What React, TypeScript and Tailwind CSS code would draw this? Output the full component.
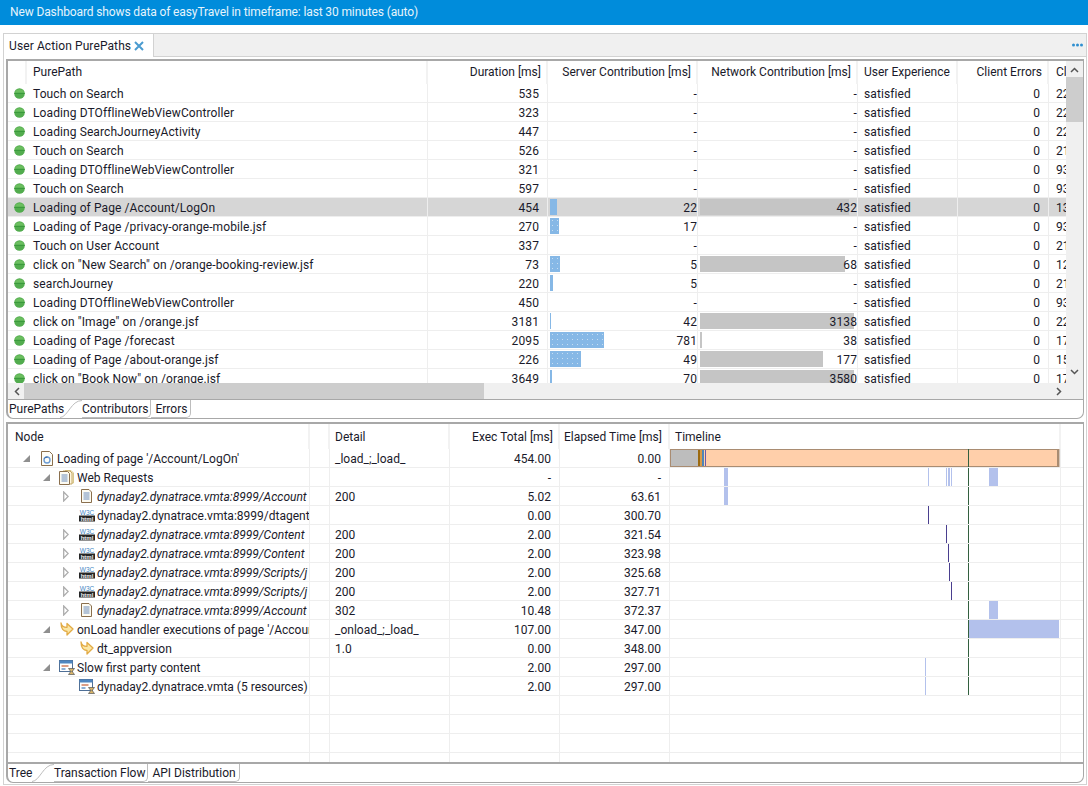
import type { ReactNode } from "react"

type ActionRow = {
  name: string
  duration: string
  server: string
  serverBar?: number
  network: string
  networkBar?: number
  cli: string
}

const actions: ActionRow[] = [
  { name: "Touch on Search", duration: "535", server: "-", network: "-", cli: "225" },
  { name: "Loading DTOfflineWebViewController", duration: "323", server: "-", network: "-", cli: "225" },
  { name: "Loading SearchJourneyActivity", duration: "447", server: "-", network: "-", cli: "225" },
  { name: "Touch on Search", duration: "526", server: "-", network: "-", cli: "219" },
  { name: "Loading DTOfflineWebViewController", duration: "321", server: "-", network: "-", cli: "93" },
  { name: "Touch on Search", duration: "597", server: "-", network: "-", cli: "93" },
  { name: "Loading of Page /Account/LogOn", duration: "454", server: "22", serverBar: 7, network: "432", networkBar: 149, cli: "135" },
  { name: "Loading of Page /privacy-orange-mobile.jsf", duration: "270", server: "17", serverBar: 9, network: "-", cli: "93" },
  { name: "Touch on User Account", duration: "337", server: "-", network: "-", cli: "219" },
  { name: 'click on "New Search" on /orange-booking-review.jsf', duration: "73", server: "5", serverBar: 10, network: "68", networkBar: 145, cli: "128" },
  { name: "searchJourney", duration: "220", server: "5", serverBar: 3, network: "-", cli: "219" },
  { name: "Loading DTOfflineWebViewController", duration: "450", server: "-", network: "-", cli: "93" },
  { name: 'click on "Image" on /orange.jsf', duration: "3181", server: "42", serverBar: 1, network: "3138", networkBar: 154, cli: "225" },
  { name: "Loading of Page /forecast", duration: "2095", server: "781", serverBar: 54, network: "38", networkBar: 2, cli: "175" },
  { name: "Loading of Page /about-orange.jsf", duration: "226", server: "49", serverBar: 31, network: "177", networkBar: 123, cli: "156" },
  { name: 'click on "Book Now" on /orange.jsf', duration: "3649", server: "70", serverBar: 2, network: "3580", networkBar: 154, cli: "175" },
]

type IconKind = "page" | "folder" | "doc" | "w3c" | "handler" | "slow"

type NodeRow = {
  name: string
  depth: 0 | 1 | 2
  arrow?: "open" | "closed"
  icon: IconKind
  italic?: boolean
  detail: string
  exec: string
  elapsed: string
  bars: { x: number; w: number; c: string }[]
}

const LIGHT = "#b3c1ec"
const DARK = "#4a3f8f"

// names stop where the Node column cuts them off
const nodes: NodeRow[] = [
  { name: "Loading of page '/Account/LogOn'", depth: 0, arrow: "open", icon: "page", detail: "_load_;_load_", exec: "454.00", elapsed: "0.00", bars: [] },
  { name: "Web Requests", depth: 1, arrow: "open", icon: "folder", detail: "", exec: "-", elapsed: "-", bars: [
    { x: 54, w: 4, c: LIGHT }, { x: 258, w: 1, c: LIGHT }, { x: 276, w: 1, c: LIGHT }, { x: 278, w: 2, c: LIGHT }, { x: 281, w: 1, c: LIGHT }, { x: 319, w: 9, c: LIGHT },
  ] },
  { name: "dynaday2.dynatrace.vmta:8999/Account", depth: 2, arrow: "closed", icon: "doc", italic: true, detail: "200", exec: "5.02", elapsed: "63.61", bars: [{ x: 54, w: 4, c: LIGHT }] },
  { name: "dynaday2.dynatrace.vmta:8999/dtagent_", depth: 2, icon: "w3c", detail: "", exec: "0.00", elapsed: "300.70", bars: [{ x: 258, w: 1, c: DARK }] },
  { name: "dynaday2.dynatrace.vmta:8999/Content", depth: 2, arrow: "closed", icon: "w3c", italic: true, detail: "200", exec: "2.00", elapsed: "321.54", bars: [{ x: 276, w: 1, c: DARK }] },
  { name: "dynaday2.dynatrace.vmta:8999/Content", depth: 2, arrow: "closed", icon: "w3c", italic: true, detail: "200", exec: "2.00", elapsed: "323.98", bars: [{ x: 278, w: 1, c: DARK }] },
  { name: "dynaday2.dynatrace.vmta:8999/Scripts/j", depth: 2, arrow: "closed", icon: "w3c", italic: true, detail: "200", exec: "2.00", elapsed: "325.68", bars: [{ x: 279, w: 1, c: DARK }] },
  { name: "dynaday2.dynatrace.vmta:8999/Scripts/j", depth: 2, arrow: "closed", icon: "w3c", italic: true, detail: "200", exec: "2.00", elapsed: "327.71", bars: [{ x: 281, w: 1, c: DARK }] },
  { name: "dynaday2.dynatrace.vmta:8999/Account", depth: 2, arrow: "closed", icon: "doc", italic: true, detail: "302", exec: "10.48", elapsed: "372.37", bars: [{ x: 319, w: 9, c: LIGHT }] },
  { name: "onLoad handler executions of page '/Accour", depth: 1, arrow: "open", icon: "handler", detail: "_onload_;_load_", exec: "107.00", elapsed: "347.00", bars: [{ x: 298, w: 91, c: LIGHT }] },
  { name: "dt_appversion", depth: 2, icon: "handler", detail: "1.0", exec: "0.00", elapsed: "348.00", bars: [] },
  { name: "Slow first party content", depth: 1, arrow: "open", icon: "slow", detail: "", exec: "2.00", elapsed: "297.00", bars: [{ x: 255, w: 1, c: LIGHT }] },
  { name: "dynaday2.dynatrace.vmta (5 resources)", depth: 2, icon: "slow", detail: "", exec: "2.00", elapsed: "297.00", bars: [{ x: 255, w: 1, c: LIGHT }] },
]

function StatusDot() {
  return (
    <svg width="11" height="11" viewBox="0 0 11 11">
      <circle cx="5.5" cy="5.5" r="5.3" fill="#52ac4e" />
      <path d="M.8 4.500a5 5 0 0 1 9.400 0z" fill="#6cbf60" />
      <rect x="0.3" y="5" width="10.4" height="1" fill="#3a9a3c" />
    </svg>
  )
}

function TreeArrow({ kind }: { kind: "open" | "closed" }) {
  if (kind === "open") {
    return (
      <svg width="7" height="7" viewBox="0 0 7 7">
        <path d="M0 7h7V0z" fill="#8f8f8f" />
      </svg>
    )
  }
  return (
    <svg width="6" height="11" viewBox="0 0 6 11">
      <path d="M.7 1l4.500 4.500-4.500 4.500z" fill="#fff" stroke="#adadad" strokeWidth="1.300" />
    </svg>
  )
}

function NodeIcon({ kind }: { kind: IconKind }) {
  if (kind === "page") {
    return (
      <svg width="12" height="15" viewBox="0 0 12 15">
        <path d="M.5.5h8l3 3v11H.5z" fill="#fdfdf8" stroke="#8a6f4d" />
        <circle cx="6" cy="9" r="3" fill="none" stroke="#6c9bd2" strokeWidth="1.400" />
        <path d="M3.500 7.500a3 3 0 0 1 3-1.500" fill="none" stroke="#2f5f9f" />
      </svg>
    )
  }
  if (kind === "folder") {
    return (
      <svg width="15" height="15" viewBox="0 0 15 15">
        <path d="M6 .5h6l2.500 2.500v10H12" fill="#f6edc8" stroke="#d8c88e" />
        <path d="M4 1h7l2 2v11h-2" fill="#fff8df" stroke="#c4a766" />
        <path d="M.5 1.500h8l2 2v11H.5z" fill="#fdfbf2" stroke="#8a6f4d" />
        <path d="M2.500 5h6M2.500 7h6M2.500 9h6M2.500 11h6" stroke="#6b8cbc" />
      </svg>
    )
  }
  if (kind === "doc") {
    return (
      <svg width="11" height="14" viewBox="0 0 11 14">
        <path d="M.5.5h7.500l2.500 2.500v10.500H.5z" fill="#fdfbf2" stroke="#8a6f4d" />
        <path d="M2.500 4h6M2.500 6h6M2.500 8h6M2.500 10h6" stroke="#6b8cbc" />
      </svg>
    )
  }
  if (kind === "w3c") {
    return (
      <svg width="16" height="13" viewBox="0 0 16 13">
        <text x="8" y="5.500" textAnchor="middle" fontSize="6.500" fontFamily="Liberation Sans" fill="#3f86c4">W3C</text>
        <rect x="0" y="6.500" width="16" height="6" fill="#262626" />
        <text x="8" y="11.500" textAnchor="middle" fontSize="6" fontWeight="700" fontFamily="Liberation Sans" fill="#f2f2f2">html</text>
      </svg>
    )
  }
  if (kind === "handler") {
    return (
      <svg width="14" height="14" viewBox="0 0 14 14">
        <path d="M1 .8C1.500 4 3.500 5.300 7 5.300V1.500l6 5.500-6 6V9.500C3.500 9.500 1 6.500 1 .8z" fill="#fbe6a4" stroke="#e2ab45" strokeWidth="1.300" strokeLinejoin="round" />
      </svg>
    )
  }
  return (
    <svg width="16" height="15" viewBox="0 0 16 15">
      <rect x=".5" y=".5" width="13" height="11" fill="#fff" stroke="#4f6f96" />
      <rect x=".5" y=".5" width="13" height="3" fill="#4f86c0" />
      <path d="M2.500 6h7" stroke="#c96a45" strokeWidth="1.300" />
      <path d="M2.500 9h4" stroke="#4f86c0" strokeWidth="1.300" />
      <path d="M9.500 8.500h6l-2.300 3 2.300 3h-6l2.300-3z" fill="#d8b468" stroke="#555" strokeWidth="0.700" />
    </svg>
  )
}

function Bar({ width, color, dotted }: { width: number; color: string; dotted?: boolean }) {
  return (
    <div
      className={`absolute left-[2px] top-[1px] bottom-[1px] ${color} ${dotted ? "bg-[radial-gradient(#c6ddf2_0.5px,transparent_0.6px)] bg-[length:5px_5px]" : ""}`}
      style={{ width }}
    />
  )
}

function HeaderCell({ children, className = "" }: { children?: ReactNode; className?: string }) {
  return (
    <div className={`h-full flex items-center overflow-hidden whitespace-nowrap border-r-2 border-[#f2f2f2] ${className}`}>
      {children}
    </div>
  )
}

function Cell({ children, className = "" }: { children?: ReactNode; className?: string }) {
  return (
    <div className={`relative h-full flex items-center overflow-hidden whitespace-nowrap border-r border-[#eeeeee] ${className}`}>
      {children}
    </div>
  )
}

function SubTabs({ tabs, first }: { tabs: string[]; first: string }) {
  return (
    <div className="flex h-[18px] items-stretch leading-[18px]">
      <div className={`relative pl-[1px] rounded-bl-[6px] ${first}`}>
        {tabs[0]}
        <svg className="absolute right-0 top-0" width="22" height="18" viewBox="0 0 22 18">
          <path d="M0 17.500C8 17 11 .5 22 .5" fill="none" stroke="#bdbdbd" />
        </svg>
      </div>
      <div className="pr-[2px] border-r border-b border-[#bdbdbd] rounded-br-[5px]">{tabs[1]}</div>
      <div className="pl-[4px] pr-[3px] border-r border-b border-[#bdbdbd] rounded-br-[5px]">{tabs[2]}</div>
    </div>
  )
}

const topCols = "grid-cols-[19px_401px_120px_150px_160px_100px_91px_minmax(0,1fr)]"
const bottomCols = "grid-cols-[302px_20px_120px_110px_110px_391px_21px]"

function ActionsTable() {
  return (
    <div className="h-[322px] shrink-0 overflow-hidden flex">
      <div className="flex-1 min-w-0 overflow-hidden">
        <div className={`grid ${topCols} h-[23px] items-center`}>
          <HeaderCell />
          <HeaderCell className="pl-[6px] pb-[2px]">PurePath</HeaderCell>
          <HeaderCell className="justify-end pr-[5px] pb-[2px]">Duration [ms]</HeaderCell>
          <HeaderCell className="justify-end pr-[5px] pb-[2px]">Server Contribution [ms]</HeaderCell>
          <HeaderCell className="justify-end pr-[5px] pb-[2px]">Network Contribution [ms]</HeaderCell>
          <HeaderCell className="pl-[6px] pb-[2px]">User Experience</HeaderCell>
          <HeaderCell className="justify-end pr-[5px] pb-[2px]">Client Errors</HeaderCell>
          <div className="pl-[7px] pb-[2px] overflow-hidden whitespace-nowrap">Cli</div>
        </div>
        {actions.map((a, i) => {
          const selected = i === 6
          return (
            <div
              key={i}
              className={`grid ${topCols} h-[19px] items-center border-b border-[#eeeeee] tracking-[0.1px] ${selected ? "bg-[#d6d6d6]" : ""}`}
            >
              <Cell className="justify-center border-r-0 pl-[3px]"><StatusDot /></Cell>
              <Cell className="pl-[6px] pt-[2px]">{a.name}</Cell>
              <Cell className="justify-end pr-[8px] pt-[2px]">{a.duration}</Cell>
              <Cell className="justify-end pt-[2px]">
                {a.serverBar !== undefined && <Bar width={a.serverBar} color="bg-[#86b8e6]" dotted={a.serverBar > 8} />}
                <span className="relative">{a.server}</span>
              </Cell>
              <Cell className="justify-end pt-[2px]">
                {a.networkBar !== undefined && <Bar width={a.networkBar} color="bg-[#c5c5c5]" />}
                <span className="relative">{a.network}</span>
              </Cell>
              <Cell className="pl-[6px] pt-[2px]">satisfied</Cell>
              <Cell className="justify-end pr-[8px] pt-[2px]">0</Cell>
              <Cell className="pl-[7px] pt-[2px] border-r-0">{a.cli}</Cell>
            </div>
          )
        })}
      </div>
      <div className="w-[17px] shrink-0 bg-[#f0f0f0] flex flex-col items-center">
        <svg className="mt-[6px]" width="9" height="6" viewBox="0 0 9 6"><path d="M1 5l3.500-3.500L8 5" fill="none" stroke="#555" strokeWidth="1.500" /></svg>
        <div className="mt-[4px] h-[45px] w-full bg-[#cdcdcd]" />
        <div className="flex-1" />
        <svg className="mb-[8px]" width="9" height="6" viewBox="0 0 9 6"><path d="M1 1l3.500 3.500L8 1" fill="none" stroke="#555" strokeWidth="1.500" /></svg>
      </div>
    </div>
  )
}

function TimelineBars({ row }: { row: NodeRow }) {
  return (
    <svg className="block shrink-0" width="390" height="18" viewBox="0 0 390 18">
      {row.bars.map((b, i) => (
        <rect key={i} x={b.x} y="0" width={b.w} height="18" fill={b.c} />
      ))}
      <rect x="298" y="0" width="1" height="18" fill="#33603f" />
    </svg>
  )
}

function FirstRowTimeline() {
  return (
    <svg className="block shrink-0" width="390" height="18" viewBox="0 0 390 18">
      <rect x=".5" y=".5" width="388.500" height="17" fill="#ffcfaa" stroke="#a98c72" />
      <rect x="1" y="1" width="27" height="16" fill="#bdbdbd" />
      <rect x="28" y="1" width="2" height="16" fill="#9c6a10" />
      <rect x="30" y="1" width="2" height="16" fill="#d89b4a" />
      <rect x="32" y="1" width="2" height="16" fill="#4d86b8" />
      <rect x="35" y="1" width="1" height="16" fill="#6a5aa8" />
      <rect x="387" y="1" width="2" height="16" fill="#a98c72" />
      <rect x="298" y="0" width="1" height="18" fill="#33603f" />
    </svg>
  )
}

const depthPad = { 0: "pl-[13px]", 1: "pl-[33px]", 2: "pl-[53px]" }

function NodeTable() {
  const blanks = [0, 1, 2, 3]
  return (
    <div className="flex-1 min-h-0 overflow-hidden">
      <div className={`grid ${bottomCols} h-[25px] items-center`}>
        <HeaderCell className="pl-[7px]">Node</HeaderCell>
        <HeaderCell />
        <HeaderCell className="pl-[5px]">Detail</HeaderCell>
        <HeaderCell className="justify-end pr-[5px]">Exec Total [ms]</HeaderCell>
        <HeaderCell className="justify-end pr-[6px]">Elapsed Time [ms]</HeaderCell>
        <HeaderCell className="pl-[5px]">Timeline</HeaderCell>
        <div />
      </div>
      {nodes.map((n, i) => (
        <div key={i} className={`grid ${bottomCols} h-[19px] items-center border-b border-[#eeeeee]`}>
          <Cell className={depthPad[n.depth]}>
            <div className="w-[17px] shrink-0 flex pl-[2px]">{n.arrow && <TreeArrow kind={n.arrow} />}</div>
            <div className="w-[17px] shrink-0 flex justify-center"><NodeIcon kind={n.icon} /></div>
            <span className={`ml-[2px] pt-[2px] ${n.italic ? "italic" : ""}`}>{n.name}</span>
          </Cell>
          <Cell />
          <Cell className="pl-[5px] pt-[2px]">{n.detail}</Cell>
          <Cell className="justify-end pr-[8px] pt-[2px]">{n.exec}</Cell>
          <Cell className="justify-end pr-[8px] pt-[2px]">{n.elapsed}</Cell>
          <Cell>{i === 0 ? <FirstRowTimeline /> : <TimelineBars row={n} />}</Cell>
          <div />
        </div>
      ))}
      {blanks.map((b) => (
        <div key={b} className={`grid ${bottomCols} h-[19px] border-b border-[#eeeeee]`}>
          <Cell /><Cell /><Cell /><Cell /><Cell /><Cell /><div />
        </div>
      ))}
    </div>
  )
}

export default function App() {
  return (
    <div className="h-[786px] w-[1088px] overflow-hidden bg-white text-[12px] leading-[18px] text-[#1a1a2a] font-['Roboto',sans-serif]">
      <div className="h-[25px] bg-[#008cdb] pl-[10px] text-[12px] leading-[25px] tracking-[-0.12px] text-[#e6f4fc]">
        New Dashboard shows data of easyTravel in timeframe: last 30 minutes (auto)
      </div>

      <div className="ml-[3px] mr-[1px] mt-[8px] h-[752px] border border-[#d2d2d2] flex flex-col">
        <div className="h-[23px] shrink-0 flex bg-[#f0f0f0] border-b border-[#d2d2d2]">
          <div className="w-[150px] h-[23px] bg-white border-r border-[#d2d2d2] pl-[5px] flex items-center gap-[3px] tracking-[0.1px]">
            <span>User Action PurePaths</span>
            <svg width="10" height="10" viewBox="0 0 10 10">
              <path d="M1 1l8 8M9 1l-8 8" stroke="#4a9bd0" strokeWidth="2" />
            </svg>
          </div>
          <div className="flex-1 flex justify-end items-center pr-[2px]">
            <svg width="12" height="4" viewBox="0 0 12 4">
              <circle cx="1.500" cy="2" r="1.500" fill="#2f8fd0" />
              <circle cx="5.500" cy="2" r="1.500" fill="#2f8fd0" />
              <circle cx="9.500" cy="2" r="1.500" fill="#2f8fd0" />
            </svg>
          </div>
        </div>

        <div className="mx-[2px] mt-[2px] h-[360px] shrink-0 border-t-2 border-l-2 border-r border-b border-[#a8a8a8] rounded-b-[7px] flex flex-col overflow-hidden">
          <ActionsTable />
          <div className="h-[16px] shrink-0 flex items-center bg-[#f0f0f0]">
            <svg className="ml-[6px]" width="6" height="9" viewBox="0 0 6 9"><path d="M5 1L1.500 4.500 5 8" fill="none" stroke="#555" strokeWidth="1.500" /></svg>
            <div className="ml-[4px] h-full w-[460px] bg-[#cdcdcd]" />
            <div className="flex-1" />
            <svg className="mr-[21px]" width="6" height="9" viewBox="0 0 6 9"><path d="M1 1l3.500 3.500L1 8" fill="none" stroke="#555" strokeWidth="1.500" /></svg>
          </div>
          <div className="h-[1px] shrink-0 bg-[#a8a8a8]" />
          <SubTabs tabs={["PurePaths", "Contributors", "Errors"]} first="w-[74px]" />
        </div>

        <div className="mx-[2px] mt-[3px] flex-1 min-h-0 mb-[1px] border-t-2 border-l-2 border-r border-b border-[#a8a8a8] rounded-b-[7px] flex flex-col overflow-hidden">
          <NodeTable />
          <div className="h-[2px] shrink-0 bg-[#a8a8a8]" />
          <SubTabs tabs={["Tree", "Transaction Flow", "API Distribution"]} first="w-[46px]" />
        </div>
      </div>
    </div>
  )
}
